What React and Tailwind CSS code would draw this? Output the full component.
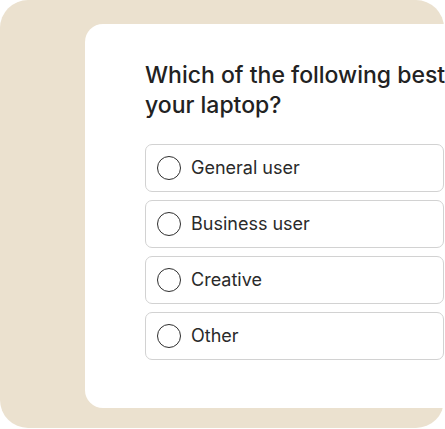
import React from 'react';

const options = ['General user', 'Business user', 'Creative', 'Other'];

const Option = ({ label }) => (
  <label className="flex h-[48px] w-[299px] cursor-pointer items-center gap-[10px] rounded-[7px] border border-[#d2d2d2] bg-white pl-[11px]">
    <span className="block h-[24px] w-[24px] shrink-0 rounded-full border-[1.25px] border-[#2e2e2e]" />
    <span className="text-[18px] leading-none text-[#2a2a2a]">{label}</span>
  </label>
);

export default function App() {
  return (
    <div
      className="h-[429px] w-[445px] overflow-hidden bg-white"
      style={{ fontFamily: 'Inter, "Noto Sans", sans-serif' }}
    >
      <div className="h-[428px] w-[444px] rounded-[28px] bg-[#ebe1cf] pl-[85px] pt-[24px]">
        <div className="h-[384px] w-[560px] rounded-l-[18px] bg-white pl-[60px] pt-[36px]">
          {/* heading runs past the right edge, as in the shot */}
          <h1 className="whitespace-nowrap text-[23px] font-medium leading-[30px] text-[#222222]">
            Which of the following best describes
            <br />
            your laptop?
          </h1>
          <div className="mt-[24px] flex flex-col gap-[8px]">
            {options.map((o) => (
              <Option key={o} label={o} />
            ))}
          </div>
        </div>
      </div>
    </div>
  );
}
